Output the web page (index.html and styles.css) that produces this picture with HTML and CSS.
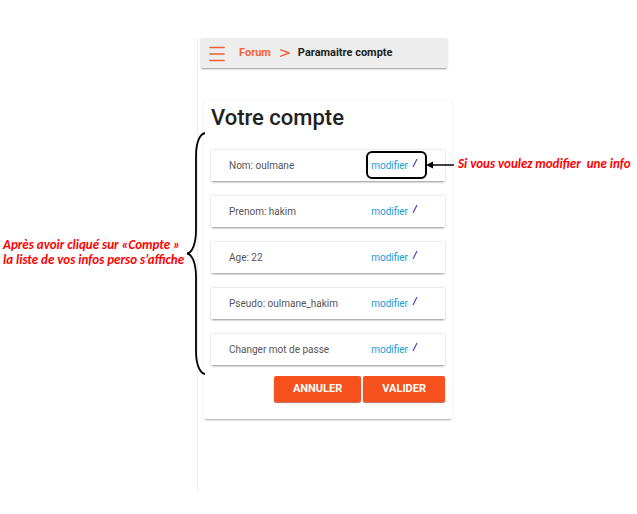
FILE: index.html
```html
<!DOCTYPE html>
<html lang="fr">
<head>
<meta charset="utf-8">
<meta name="viewport" content="width=device-width, initial-scale=1">
<title>Votre compte</title>
<link rel="stylesheet" href="styles.css">
</head>
<body>
<main class="guide">
  <aside class="note note-list">
    <p>Après avoir cliqué sur «Compte »<br>la liste de vos infos perso s’affiche</p>
  </aside>

  <section class="screen">
    <header class="topbar">
      <button class="menu" type="button" aria-label="Menu">
        <svg width="16" height="16" viewBox="0 0 16 16"><path d="M1 1.500h14M1 8h14M1 14.500h14" stroke="#ee5f38" stroke-width="1.600" stroke-linecap="round"/></svg>
      </button>
      <a class="crumb" href="#">Forum</a>
      <svg class="chevron" width="10" height="8" viewBox="0 0 10 8" aria-hidden="true"><path d="M0 .6 9.200 4 0 7.400" fill="none" stroke="#ee5f38" stroke-width="1.400"/></svg>
      <span class="current">Paramaitre compte</span>
    </header>

    <div class="card">
      <h1>Votre compte</h1>
      <svg class="brace" width="20" height="244" viewBox="0 0 20 244" aria-hidden="true"><path d="M19 1C14 2 10 10 10 24V98C10 112 6 121 1 121.500C6 122 10 131 10 145V219C10 233 14 241 19 242" fill="none" stroke="#000" stroke-width="1.800"/></svg>
      <ul class="infos">
        <li><span>Nom: oulmane</span><a class="edit marked" href="#">modifier <svg width="6" height="10" viewBox="0 0 6 10"><path d="M1 9 5 1" stroke="#6540c4" stroke-width="1.200"/></svg></a></li>
        <li><span>Prenom: hakim</span><a class="edit" href="#">modifier <svg width="6" height="10" viewBox="0 0 6 10"><path d="M1 9 5 1" stroke="#6540c4" stroke-width="1.200"/></svg></a></li>
        <li><span>Age: 22</span><a class="edit" href="#">modifier <svg width="6" height="10" viewBox="0 0 6 10"><path d="M1 9 5 1" stroke="#6540c4" stroke-width="1.200"/></svg></a></li>
        <li><span>Pseudo: oulmane_hakim</span><a class="edit" href="#">modifier <svg width="6" height="10" viewBox="0 0 6 10"><path d="M1 9 5 1" stroke="#6540c4" stroke-width="1.200"/></svg></a></li>
        <li><span>Changer mot de passe</span><a class="edit" href="#">modifier <svg width="6" height="10" viewBox="0 0 6 10"><path d="M1 9 5 1" stroke="#6540c4" stroke-width="1.200"/></svg></a></li>
      </ul>
      <div class="actions">
        <button class="action" type="button">ANNULER</button>
        <button class="action" type="button">VALIDER</button>
      </div>
    </div>
  </section>

  <aside class="note note-edit">
    <svg class="arrow" width="28" height="8" viewBox="0 0 28 8" aria-hidden="true"><path d="M5 4H28" stroke="#000" stroke-width="1.500"/><path d="M0 4 7 .5v7z"/></svg>
    <p>Si vous voulez modifier &nbsp;une info</p>
  </aside>
</main>
</body>
</html>
```
FILE: styles.css
```css
* {
  box-sizing: border-box;
}

body {
  margin: 0;
  background: #fff;
  color: #555;
  font: 11px/16px Roboto, "Liberation Sans", sans-serif;
}

h1,
p,
ul {
  margin: 0;
  padding: 0;
}

a {
  text-decoration: none;
}

.guide {
  display: grid;
  grid-template-columns: 197px 255px 1fr;
  padding-top: 38px;
}

.note {
  color: #f00;
  font: italic 700 13px/15px Carlito, Calibri, Lato, sans-serif;
  white-space: nowrap;
}

.note-list {
  padding: 199px 0 0 3px;
}

.note-edit {
  position: relative;
  padding: 118px 0 0 6px;
}

.arrow {
  position: absolute;
  top: 123px;
  left: -26px;
}

.screen {
  padding: 0 0 72px 2px;
  border-left: 1px solid #eee;
}

.topbar {
  display: flex;
  align-items: center;
  height: 30px;
  margin: 0 4px 33px 0;
  padding: 0 9px;
  border-radius: 2px;
  background: #ededed;
  box-shadow: 0 2px 2px -1px #999;
  color: #222;
  font-weight: 700;
}

.menu {
  display: flex;
  margin: 2px 14px 0 0;
  padding: 0;
  border: 0;
  background: none;
}

.crumb {
  color: #f4623a;
}

.chevron {
  margin: 0 8px 0 9px;
}

.card {
  position: relative;
  margin-left: 4px;
  padding: 4px 7px 17px;
  border-radius: 2px;
  box-shadow: 0 2px 2px -1px #aaa, 0 0 2px #e8e8e8;
}

h1 {
  margin-bottom: 19px;
  color: #222;
  font-size: 22px;
  font-weight: 500;
  line-height: 26px;
}

.brace {
  position: absolute;
  top: 31px;
  left: -18px;
}

.infos {
  display: grid;
  gap: 15px;
  font-size: 10px;
  list-style: none;
}

.infos li {
  display: flex;
  align-items: center;
  justify-content: space-between;
  height: 31px;
  padding: 0 18px;
  border-radius: 1px;
  box-shadow: 0 2px 2px -1px #999, 0 0 2px #bbb;
}

.edit {
  display: flex;
  gap: 4px;
  margin-bottom: 2px;
  padding: 5px 7px 3px 3px;
  border: 2px solid transparent;
  border-radius: 6px;
  color: #209bd8;
}

.marked {
  border-color: #000;
}

.actions {
  display: flex;
  justify-content: flex-end;
  gap: 2px;
  margin-top: 11px;
}

.action {
  height: 26px;
  padding: 0 19px;
  border: 0;
  border-radius: 2px;
  background: #f6511d;
  box-shadow: 0 1px 1px #b66;
  color: #fff;
  font: 700 11px/16px Roboto, sans-serif;
}
```
